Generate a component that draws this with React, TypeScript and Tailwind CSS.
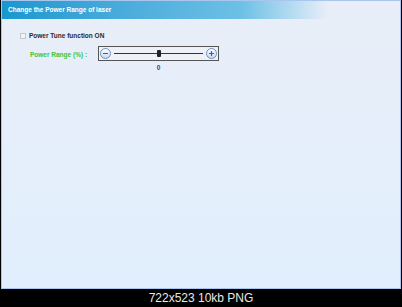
import { Minus, Plus } from 'lucide-react'

function RoundButton({ kind }: { kind: 'minus' | 'plus' }) {
  const Icon = kind === 'minus' ? Minus : Plus
  return (
    <div className="flex h-[11px] w-[11px] items-center justify-center rounded-full border border-[#6b8fc4] bg-gradient-to-b from-white to-[#c9d8f0]">
      <Icon className="h-[7px] w-[7px] text-[#3d5f9c]" strokeWidth={4} />
    </div>
  )
}

export default function App() {
  return (
    <div className="flex h-[307px] w-[402px] flex-col bg-black font-['Liberation_Sans',Arial,sans-serif]">
      <div className="mx-[1px] flex h-[291px] flex-col border border-[#a9c6ee] bg-gradient-to-b from-[#e9eef8] to-[#e1eefd]">
        <div className="flex h-[18px] items-center bg-gradient-to-r from-[#1797cf] via-[#6cc0e6] via-60% to-transparent to-[82%] pl-[6px]">
          <span className="text-[6.5px] font-bold text-white">Change the Power Range of laser</span>
        </div>
        <div className="flex flex-col pl-[18px] pt-[12px]">
          <label className="flex items-center gap-[3px]">
            <span className="h-[6px] w-[6px] border border-[#c4c9d0] bg-[#f3f3f3]" />
            <span className="text-[6.5px] font-bold text-[#2a2a2a]">Power Tune function ON</span>
          </label>
          <div className="mt-[5px] flex items-start pl-[10px]">
            <span className="mt-[4px] w-[68px] text-[6.5px] font-bold text-[#3bc43b]">Power Range (%) :</span>
            <div className="flex flex-col items-center">
              <div className="flex h-[15px] w-[121px] items-center gap-[2px] border border-[#555] bg-[#eef2f8] px-[1px]">
                <RoundButton kind="minus" />
                <div className="relative mx-[1px] h-px flex-1 bg-[#333]">
                  <div className="absolute left-1/2 top-[-3px] h-[7px] w-[4px] -translate-x-1/2 rounded-[1px] bg-[#222]" />
                </div>
                <RoundButton kind="plus" />
              </div>
              <span className="mt-[2px] text-[6.5px] font-bold text-[#2e4a86]">0</span>
            </div>
          </div>
        </div>
      </div>
      <div className="flex flex-1 items-center justify-center">
        <span className="text-[12px] text-[#e8e8e8]">722x523 10kb PNG</span>
      </div>
    </div>
  )
}
